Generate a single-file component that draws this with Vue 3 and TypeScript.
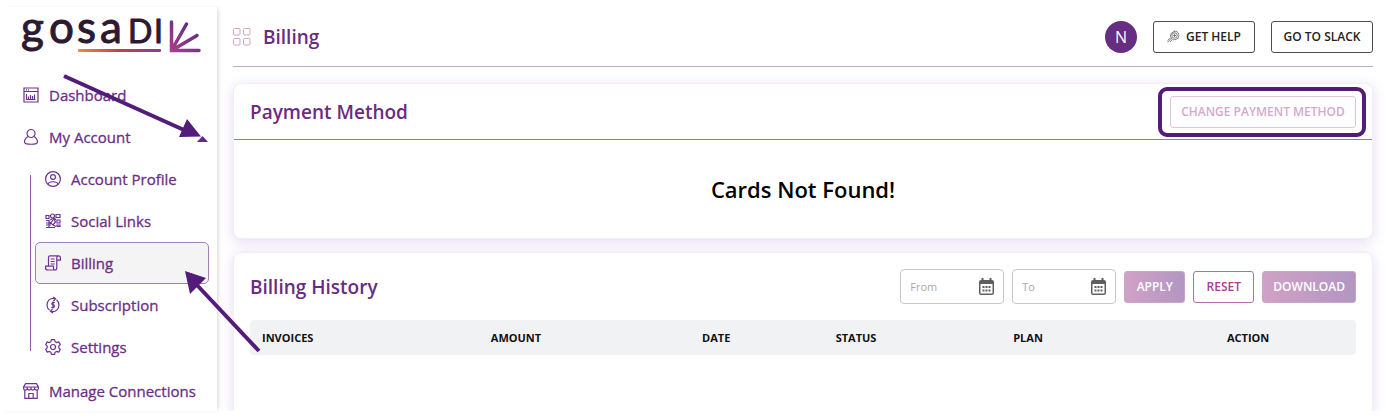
<script setup lang="ts">
import { ref } from 'vue'

interface NavItem {
  label: string
  icon: string
  active?: boolean
}

const accountItems: NavItem[] = [
  { label: 'Account Profile', icon: 'profile' },
  { label: 'Social Links', icon: 'social' },
  { label: 'Billing', icon: 'billing', active: true },
  { label: 'Subscription', icon: 'subscription' },
  { label: 'Settings', icon: 'settings' },
]

const columns = ['Invoices', 'Amount', 'Date', 'Status', 'Plan', 'Action']
const from = ref('')
const to = ref('')
</script>

<template>
  <div class="page">
    <div class="shell">
      <aside class="sidebar">
        <a class="brand" href="#" aria-label="gosadi home">
          <svg width="182" height="60" viewBox="0 -18 182 60">
            <defs>
              <linearGradient id="bar" x1="0" x2="1" y1="0" y2="0">
                <stop offset="0" stop-color="#ee8a3c" />
                <stop offset="0.5" stop-color="#c0404f" />
                <stop offset="1" stop-color="#94398f" />
              </linearGradient>
              <linearGradient id="rays" gradientUnits="userSpaceOnUse" x1="150" y1="34" x2="174" y2="8">
                <stop offset="0" stop-color="#a8408c" />
                <stop offset="1" stop-color="#5f2a82" />
              </linearGradient>
            </defs>
            <text class="wordmark" y="25" x="0 28 56 79">gosa<tspan class="wordmark-caps" x="107 133">DI</tspan></text>
            <rect x="57" y="31" width="83" height="3" rx="1" fill="url(#bar)" />
            <g stroke="url(#rays)" stroke-width="3.500" stroke-linecap="round" fill="none">
              <path d="M150.500 4V32.500L178 32.600M150.500 32.500L165.500 6M150.500 32.500L176 17.500" />
            </g>
          </svg>
        </a>

        <nav aria-label="Main">
          <ul class="menu">
            <li>
              <a class="item" href="#">
                <svg class="icon" viewBox="0 0 16 16">
                  <path d="M1 1h14v14H1zM1 4.500h14M3 2.800h1M5 2.800h1M3.500 7v5.500h9M5.500 12V9.500M7.500 12V8M9.500 12V9M11.500 12V7.500" />
                </svg>
                Dashboard
              </a>
            </li>
            <li>
              <button class="item" type="button" aria-expanded="true">
                <svg class="icon" viewBox="0 0 16 16">
                  <circle cx="8" cy="4.500" r="4" />
                  <path d="M5 7.500C2.500 9 1.500 11.500 1.500 13c0 3 13 3 13 0 0-1.500-1-4-3.500-5.500" />
                </svg>
                My Account
                <svg class="caret" width="11" height="6" viewBox="0 0 11 6"><path d="M0 6L5.500 0 11 6z" /></svg>
              </button>
              <ul class="submenu">
                <li v-for="item in accountItems" :key="item.label">
                  <a class="item sub" :class="{ active: item.active }" href="#" :aria-current="item.active ? 'page' : undefined">
                    <svg v-if="item.icon === 'profile'" class="icon" viewBox="0 0 16 16">
                      <circle cx="8" cy="8" r="7.400" />
                      <circle cx="8" cy="6" r="2.400" />
                      <path d="M3 13c1-3 9-3 10 0" />
                    </svg>
                    <svg v-else-if="item.icon === 'social'" class="icon" viewBox="0 0 16 16">
                      <path d="M1 2.500h3v3H1zM1 10h4M1 12h5M1 14.500h9M1 7.500h3v7M11 1.500h4v3h-4zM12 7h3v3h-3zM12 12h3v1.500h-3z" />
                      <circle cx="7.500" cy="3" r="2" />
                      <path d="M5 7l3-1.500L10.500 9 8 12M4.500 9L8 12l3 1.500M5 11l3-4M9 5l2 2" />
                    </svg>
                    <svg v-else-if="item.icon === 'billing'" class="icon" viewBox="0 0 16 16">
                      <path d="M3.500 11V2.500C3.500 1.300 4 .800 5 .800h8.500M11.800 13V3c0-1.500.500-2.200 1.700-2.200s1.900.700 1.900 2v2.400h-3.600M11.800 12.500c0 1.700-.700 2.500-1.700 2.500s-1.600-.800-1.600-2v-1.800H.600V13c0 1.300.700 2 2 2H10M5.700 4h4M5.700 6.500h4M5.700 9h4" />
                    </svg>
                    <svg v-else-if="item.icon === 'subscription'" class="icon" viewBox="0 0 16 16">
                      <path d="M10 1.500C5 .500 2 4 2 8c0 2.200 1 4 2.500 5.200M8 0l2.500 1.600L8.500 4M6 14.500c5 1 8-2.500 8-6.500 0-2.200-1-4-2.500-5.200M8 16l-2.500-1.600L7.500 12M9.800 5.500H7.800c-1.200 0-1.200 2.300 0 2.300h.700c1.200 0 1.200 2.500 0 2.500H6.400M8 4.500v7" />
                    </svg>
                    <svg v-else class="icon" viewBox="0 0 16 16">
                      <path stroke-linejoin="round" d="M6.400.600h3.200l.500 2.100 1.500.900 2.100-.700 1.600 2.700-1.500 1.500v1.800l1.500 1.500-1.600 2.700-2.100-.700-1.500.900-.500 2.100H6.400l-.500-2.100-1.500-.900-2.100.700L.700 10.400l1.500-1.500V7.100L.700 5.600l1.600-2.700 2.100.700 1.500-.900z" />
                      <circle cx="8" cy="8" r="2.500" />
                    </svg>
                    {{ item.label }}
                  </a>
                </li>
              </ul>
            </li>
            <li>
              <a class="item" href="#">
                <svg class="icon" viewBox="0 0 16 16">
                  <path d="M2.500.700h11L15.400 4v1.500c0 2-2.900 2-3.700.500-.800 1.500-2.900 1.500-3.700 0-.800 1.500-2.900 1.500-3.700 0C3.500 7.500.600 7.500.600 5.500V4zM.600 4h14.800M4.300 4v2M8 4v2M11.700 4v2M1.800 7.500v7.800h12.400V7.500M5.800 15v-4.500h4.400V15" />
                </svg>
                Manage Connections
              </a>
            </li>
          </ul>
        </nav>
      </aside>

      <main class="content">
        <header class="topbar">
          <svg class="grid-icon" width="18" height="18" viewBox="0 0 18 18">
            <rect x="0.500" y="0.500" width="6.500" height="6.500" rx="1" />
            <rect x="10.500" y="0.500" width="6.500" height="6.500" rx="1" />
            <rect x="0.500" y="10.500" width="6.500" height="6.500" rx="1" />
            <rect x="10.500" y="10.500" width="6.500" height="6.500" rx="1" />
          </svg>
          <h1>Billing</h1>
          <span class="avatar">N</span>
          <button class="btn dark" type="button">
            <svg class="help-icon" width="13" height="13" viewBox="0 0 13 13">
              <path d="M7.500.700l1 .900 1.400-.200.400 1.300 1.300.600-.300 1.400.800 1.200-.900 1.100v1.400l-1.400.200-.8 1.200-1.400-.400-1.300.600-.900-1.100-1.400-.300.100-1.400-.9-1.200.8-1.200-.1-1.400 1.400-.400.700-1.200 1.400.200z" />
              <circle cx="7.500" cy="5.500" r="2.700" />
              <path d="M4 8.500L.600 12.400M2.800 8.300L.600 10.500M5 9.800L3 12M6 5.500h3M7.500 4v3" />
            </svg>
            GET HELP
          </button>
          <button class="btn dark" type="button">GO TO SLACK</button>
        </header>

        <section class="card">
          <div class="card-head">
            <h2>Payment Method</h2>
            <div class="highlight">
              <button class="btn faded" type="button">CHANGE PAYMENT METHOD</button>
            </div>
          </div>
          <p class="empty">Cards Not Found!</p>
        </section>

        <section class="card history">
          <div class="history-head">
            <h2>Billing History</h2>
            <form class="filters" @submit.prevent>
              <label class="date-field">
                <input v-model="from" type="text" placeholder="From" aria-label="From" />
                <svg width="15" height="17" viewBox="0 0 15 17"><path fill-rule="evenodd" d="M2.500 0h2v2h6V0h2v2h.500a2 2 0 0 1 2 2v11a2 2 0 0 1-2 2H2a2 2 0 0 1-2-2V4a2 2 0 0 1 2-2h.500zM1.500 6v9.500h12V6zM3.500 8h2v2h-2zM6.500 8h2v2h-2zM9.500 8h2v2h-2zM3.500 11.500h2v2h-2zM6.500 11.500h2v2h-2zM9.500 11.500h2v2h-2z" /></svg>
              </label>
              <label class="date-field">
                <input v-model="to" type="text" placeholder="To" aria-label="To" />
                <svg width="15" height="17" viewBox="0 0 15 17"><path fill-rule="evenodd" d="M2.500 0h2v2h6V0h2v2h.500a2 2 0 0 1 2 2v11a2 2 0 0 1-2 2H2a2 2 0 0 1-2-2V4a2 2 0 0 1 2-2h.500zM1.500 6v9.500h12V6zM3.500 8h2v2h-2zM6.500 8h2v2h-2zM9.500 8h2v2h-2zM3.500 11.500h2v2h-2zM6.500 11.500h2v2h-2zM9.500 11.500h2v2h-2z" /></svg>
              </label>
              <button class="btn solid" type="submit">APPLY</button>
              <button class="btn reset" type="reset">RESET</button>
              <button class="btn solid" type="button">DOWNLOAD</button>
            </form>
          </div>
          <table>
            <colgroup>
              <col class="c-invoices" />
              <col class="c-amount" />
              <col class="c-date" />
              <col class="c-status" />
              <col class="c-plan" />
              <col class="c-action" />
            </colgroup>
            <thead>
              <tr>
                <th v-for="column in columns" :key="column" scope="col">{{ column.toUpperCase() }}</th>
              </tr>
            </thead>
          </table>
        </section>
      </main>
    </div>

    <svg class="arrows" width="280" height="360" viewBox="0 0 280 360" aria-hidden="true">
      <path class="shaft" d="M64 76L184 130M259 351L196 284" />
      <path class="head" d="M187 119L201 136.500 179 137zM185 271L206 278 190 294z" />
    </svg>
  </div>
</template>

<style>
body {
  margin: 0;
  background: #fff;
}
</style>

<style scoped>
.page {
  position: relative;
  box-sizing: border-box;
  height: 100vh;
  padding: 7px 0;
  overflow: hidden;
  color: #662d82;
  font-family: "Open Sans", "Noto Sans", sans-serif;
}

.page * {
  box-sizing: border-box;
}

.shell {
  display: flex;
  height: 100%;
}

.sidebar {
  flex: 0 0 217px;
  box-shadow: 3px 0 4px -2px rgba(60, 50, 70, 0.22);
}

.brand {
  display: block;
  height: 74px;
  margin-top: -7px;
  padding-left: 21px;
}

.wordmark {
  fill: #2b1a30;
  stroke: #2b1a30;
  stroke-width: 1;
  stroke-linejoin: round;
  font-family: Lato, sans-serif;
  font-size: 44px;
}

.wordmark-caps {
  font-size: 32px;
}

ul {
  margin: 0;
  padding: 0;
  list-style: none;
}

.item {
  display: flex;
  align-items: center;
  gap: 10px;
  width: 100%;
  height: 42px;
  padding: 0 8px 0 22px;
  border: 1px solid transparent;
  background: none;
  color: #6a2f87;
  font-family: inherit;
  font-size: 15px;
  font-weight: 500;
  text-align: left;
  text-decoration: none;
  white-space: nowrap;
  -webkit-text-stroke: 0.3px #6a2f87;
}

.icon {
  flex: none;
  width: 16px;
  height: 16px;
  fill: none;
  stroke: #6d3290;
  stroke-width: 1.2;
  overflow: visible;
}

.caret {
  margin: 4px 0 0 auto;
  fill: #5f2a82;
}

.submenu {
  margin-bottom: 2px;
  padding: 0 8px 0 35px;
  background: linear-gradient(#8e5ba5, #8e5ba5) 30px 17px / 1px calc(100% - 34px) no-repeat;
}

.item.sub {
  padding: 0 9px;
}

.item.active {
  border-color: #a57fb5;
  border-radius: 5px;
  background: #f4f4f5;
}

.content {
  display: flex;
  flex: 1;
  flex-direction: column;
  min-width: 0;
  padding: 0 13px 0 16px;
  overflow: hidden;
}

.topbar {
  display: flex;
  flex: none;
  align-items: center;
  height: 60px;
  border-bottom: 1px solid #c3a8cf;
}

.grid-icon {
  fill: none;
  stroke: #d3a3c8;
}

h1,
h2 {
  margin: 0;
  color: #692c82;
  font-size: 19px;
  font-weight: 600;
  line-height: 28px;
}

h1 {
  margin-left: 12px;
}

.avatar {
  display: grid;
  place-items: center;
  width: 32px;
  height: 32px;
  margin-left: auto;
  border-radius: 50%;
  background: #662d82;
  color: #fff;
  font-size: 16px;
}

.btn {
  display: flex;
  align-items: center;
  justify-content: center;
  height: 32px;
  padding: 0 10px;
  border: 1px solid transparent;
  border-radius: 3px;
  background: #fff;
  font-family: inherit;
  font-size: 12px;
  font-weight: 600;
  white-space: nowrap;
}

.btn.dark {
  min-width: 102px;
  margin-left: 16px;
  border-color: #4c4c4c;
  color: #222;
}

.help-icon {
  margin-right: 6px;
  fill: none;
  stroke: #666;
  stroke-width: 0.8;
}

.card {
  flex: none;
  margin-top: 16px;
  border: 1px solid #f1eef5;
  border-radius: 8px;
  background: #fff;
  box-shadow: 0 3px 14px rgba(111, 49, 190, 0.18);
}

.card-head {
  display: flex;
  align-items: center;
  justify-content: space-between;
  height: 56px;
  padding: 0 16px;
  border-bottom: 1px solid #ae6fa4;
}

.highlight {
  position: relative;
}

.highlight::after {
  position: absolute;
  inset: -9px -10px -9px -12px;
  border: 4px solid #531c79;
  border-radius: 9px;
  content: "";
  pointer-events: none;
}

.btn.faded {
  min-width: 186px;
  border-color: #e3c3dd;
  color: #d5a8cd;
}

.empty {
  margin: 0;
  padding: 34px 16px;
  color: #000;
  font-size: 22px;
  font-weight: 600;
  line-height: 30px;
  text-align: center;
}

.card.history {
  flex: 1;
  margin-top: 13px;
  padding: 16px;
  border-bottom: 0;
  border-radius: 8px 8px 0 0;
}

.history-head,
.filters {
  display: flex;
  align-items: center;
}

.history-head {
  justify-content: space-between;
}

.filters {
  gap: 8px;
}

.date-field {
  display: flex;
  align-items: center;
  width: 104px;
  height: 35px;
  padding: 0 9px;
  border: 1px solid #c8c8c8;
  border-radius: 4px;
}

.date-field input {
  flex: 1;
  min-width: 0;
  padding: 0;
  border: 0;
  outline: 0;
  background: none;
  font-family: inherit;
  font-size: 11px;
}

.date-field input::placeholder {
  color: #a8a8a8;
}

.date-field svg {
  flex: none;
  fill: #5f5f5f;
}

.btn.solid {
  min-width: 61px;
  border-color: #c8a6c9;
  background: linear-gradient(90deg, #d1a1c6, #b296c1);
  color: #fff;
}

.btn.reset {
  min-width: 61px;
  border-color: #b36fa9;
  color: #a23f93;
}

table {
  width: 100%;
  margin-top: 16px;
  border-collapse: collapse;
  table-layout: fixed;
}

.c-invoices { width: 13.2%; }
.c-amount { width: 21.7%; }
.c-date { width: 14.5%; }
.c-status { width: 10.8%; }
.c-plan { width: 20.3%; }
.c-action { width: 19.5%; }

th {
  height: 35px;
  padding: 0;
  background: #f1f2f4;
  color: #111;
  font-size: 11px;
  font-weight: 700;
  text-align: center;
}

th:first-child {
  padding-left: 12px;
  border-radius: 4px 0 0 4px;
  text-align: left;
}

th:last-child {
  border-radius: 0 4px 4px 0;
}

.arrows {
  position: absolute;
  top: 0;
  left: 0;
  pointer-events: none;
}

.shaft {
  fill: none;
  stroke: #531c79;
  stroke-width: 4;
}

.head {
  fill: #531c79;
}
</style>
